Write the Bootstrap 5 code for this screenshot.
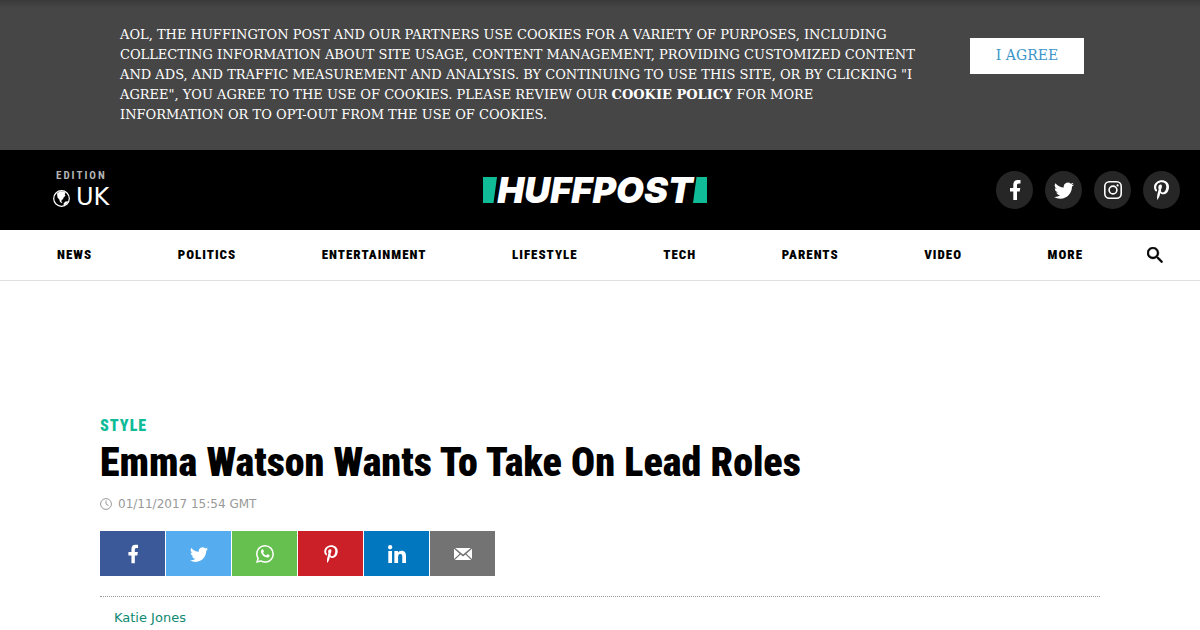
<!DOCTYPE html>
<html lang="en-GB">
<head>
<meta charset="utf-8">
<meta name="viewport" content="width=device-width, initial-scale=1">
<title>Emma Watson Wants To Take On Lead Roles | HuffPost UK</title>
<link href="https://cdn.jsdelivr.net/npm/bootstrap@5.3.0/dist/css/bootstrap.min.css" rel="stylesheet">
<style>
  body { font-family: "DejaVu Sans", sans-serif; color: #000; }
  a { text-decoration: none; }
  svg { display: block; fill: currentColor; }

  .cookie-bar {
    background: linear-gradient(#393939, #464646 8px);
    font: 13px/20px "DejaVu Serif", serif;
    padding: 25px 116px 25px 120px;
    color: #fff;
  }
  .cookie-copy { max-width: 800px; }
  .cookie-bar .btn {
    font: 14px/20px "DejaVu Serif", serif;
    color: #3b95c9; background: #fff;
    width: 114px; height: 36px; padding: 0 0 2px; margin-top: 13px;
  }

  .masthead { background: #000; min-height: 80px; padding: 0 20px 0 10px; }
  .edition { color: #fff; padding: 4px 0 0 43px; }
  .edition-label { font: 700 11px/12px "Roboto Condensed", Roboto, sans-serif; letter-spacing: 2px; color: #b4b4b4; padding-left: 3px; }
  .edition-name { font-size: 24px; line-height: 30px; gap: 6px; }
  .edition-name svg { margin-top: 3px; }
  .brand { color: #fff; font: italic 900 36px/40px Inter, sans-serif; }
  .brand svg { fill: #10bc97; }
  .social { gap: 12px; }
  .social a { width: 37px; height: 38px; background: #262626; color: #fff; }

  .sections { border-bottom: 1px solid #e0e0e0; height: 51px; padding: 0 37px 0 57px; gap: 64px; }
  .sections a { font: 900 13px/20px "Roboto Condensed", Roboto, sans-serif; letter-spacing: 1px; color: #000; }
  .sections .btn { color: #000; }

  .article { padding: 135px 100px 0; }
  .kicker { font: 900 16px/20px "Roboto Condensed", Roboto, sans-serif; letter-spacing: 1px; color: #10bc97; }
  .headline { font: 900 40px/54px "Roboto Condensed", Roboto, sans-serif; }
  .posted { font-size: 12px; line-height: 18px; color: #999; gap: 6px; margin-top: 5px; }
  .share { gap: 1px; margin-top: 18px; }
  .share .btn { width: 65px; height: 45px; color: #fff; }
  .byline { border-top: 1px dotted #999; margin-top: 20px; padding: 11px 14px; font-size: 13px; line-height: 20px; }
  .byline a { color: #0e8a72; }
</style>
</head>
<body>
<svg class="d-none" aria-hidden="true">
  <symbol id="facebook" viewBox="0 0 24 24"><path d="M14 13.500h2.700l.6-3.600H14V7.500c0-1.200.3-2 2-2h1.500V2.140c-.326-.043-1.557-.14-2.857-.14C11.928 2 10.300 3.657 10.300 6.700v3.200H7v3.600h3.300V22H14z"/></symbol>
  <symbol id="twitter" viewBox="0 0 16 16"><path d="M5.026 15c6.038 0 9.341-5.003 9.341-9.334 0-.14 0-.282-.006-.422A6.685 6.685 0 0 0 16 3.542a6.658 6.658 0 0 1-1.889.518 3.301 3.301 0 0 0 1.447-1.817 6.533 6.533 0 0 1-2.087.793A3.286 3.286 0 0 0 7.875 6.030a9.325 9.325 0 0 1-6.767-3.429 3.289 3.289 0 0 0 1.018 4.382A3.323 3.323 0 0 1 .64 6.575v.045a3.288 3.288 0 0 0 2.632 3.218 3.203 3.203 0 0 1-.865.115 3.230 3.230 0 0 1-.614-.057 3.283 3.283 0 0 0 3.067 2.277A6.588 6.588 0 0 1 .78 13.580a6.320 6.320 0 0 1-.78-.045A9.344 9.344 0 0 0 5.026 15z"/></symbol>
  <symbol id="pinterest" viewBox="0 0 384 512"><path d="M204 6.500C101.400 6.500 0 74.900 0 185.600 0 256 39.600 296 63.600 296c9.900 0 15.600-27.600 15.600-35.400 0-9.300-23.700-29.100-23.700-67.800 0-80.400 61.200-137.400 140.400-137.400 68.100 0 118.500 38.700 118.500 109.800 0 53.100-21.300 152.700-90.300 152.700-24.900 0-46.200-18-46.200-43.800 0-37.800 26.400-74.400 26.400-113.400 0-66.200-93.900-54.200-93.900 25.800 0 16.800 2.100 35.400 9.600 50.700-13.800 59.400-42 147.900-42 209.100 0 18.900 2.700 37.500 4.500 56.400 3.400 3.800 1.700 3.400 6.900 1.500 50.400-69 48.600-82.500 71.400-172.800 12.300 23.400 44.100 36 69.300 36 106.200 0 153.900-103.500 153.900-196.800C384 71.300 298.200 6.500 204 6.500z"/></symbol>
</svg>

<div class="cookie-bar d-flex justify-content-between align-items-start">
  <p class="cookie-copy mb-0">AOL, THE HUFFINGTON POST AND OUR PARTNERS USE COOKIES FOR A VARIETY OF PURPOSES, INCLUDING COLLECTING INFORMATION ABOUT SITE USAGE, CONTENT MANAGEMENT, PROVIDING CUSTOMIZED CONTENT AND ADS, AND TRAFFIC MEASUREMENT AND ANALYSIS. BY CONTINUING TO USE THIS SITE, OR BY CLICKING "I AGREE", YOU AGREE TO THE USE OF COOKIES. PLEASE REVIEW OUR <a class="text-white fw-bold" href="#">COOKIE POLICY</a> FOR MORE INFORMATION OR TO OPT-OUT FROM THE USE OF COOKIES.</p>
  <button type="button" class="btn rounded-0 border-0 flex-shrink-0">I AGREE</button>
</div>

<header class="masthead d-flex align-items-center">
  <div class="col">
    <a href="#" class="edition d-inline-block">
      <span class="edition-label d-block">EDITION</span>
      <span class="edition-name d-flex align-items-center">
        <svg width="17" height="17" viewBox="0 0 17 17" aria-hidden="true"><circle cx="8.500" cy="8.500" r="7.800" fill="none" stroke="currentColor" stroke-width="1.200"/><path d="M4 3.500 7 1.200l4 .3 1.500 1.500-.8 1.200.8 1.500-1.700 1.600-1 2.200-1 .2-.5 1.800 1 .8-.3.600L7 12 6.300 9.500 4.500 7.500zM12 11.800l3-.8-1.500 2.800-2.500 1.500-.6-1.400z"/></svg>
        <span>UK</span>
      </span>
    </a>
  </div>
  <a href="#" class="brand d-flex align-items-center">
    <svg width="14" height="26" viewBox="0 0 14 26" aria-hidden="true"><path d="M0 0h14L10.500 26H0z"/></svg>
    <span>HUFFPOST</span>
    <svg width="14" height="26" viewBox="0 0 14 26" aria-hidden="true"><path d="M3.500 0H14v26H0z"/></svg>
  </a>
  <nav class="social col d-flex justify-content-end" aria-label="Social">
    <a href="#" aria-label="Facebook" class="rounded-circle d-flex align-items-center justify-content-center"><svg width="24" height="24"><use href="#facebook"/></svg></a>
    <a href="#" aria-label="Twitter" class="rounded-circle d-flex align-items-center justify-content-center"><svg width="20" height="20"><use href="#twitter"/></svg></a>
    <a href="#" aria-label="Instagram" class="rounded-circle d-flex align-items-center justify-content-center"><svg width="18" height="18" viewBox="0 0 18 18"><g fill="none" stroke="currentColor" stroke-width="1.600"><rect x=".8" y=".8" width="16.400" height="16.400" rx="4.500"/><circle cx="9" cy="9" r="3.900"/></g><circle cx="13.600" cy="4.400" r="1.100"/></svg></a>
    <a href="#" aria-label="Pinterest" class="rounded-circle d-flex align-items-center justify-content-center"><svg width="15" height="20"><use href="#pinterest"/></svg></a>
  </nav>
</header>

<nav class="sections d-flex align-items-center" aria-label="Sections">
  <div class="d-flex flex-grow-1 justify-content-between">
    <a href="#">NEWS</a>
    <a href="#">POLITICS</a>
    <a href="#">ENTERTAINMENT</a>
    <a href="#">LIFESTYLE</a>
    <a href="#">TECH</a>
    <a href="#">PARENTS</a>
    <a href="#">VIDEO</a>
    <a href="#">MORE</a>
  </div>
  <button type="button" class="btn border-0 p-0" aria-label="Search"><svg width="16" height="16" viewBox="3 3 17.500 17.500"><path stroke="currentColor" stroke-width=".5" d="M15.500 14h-.79l-.28-.27A6.471 6.471 0 0 0 16 9.500 6.500 6.500 0 1 0 9.500 16c1.610 0 3.090-.59 4.230-1.570l.27.280v.79l5 4.990L20.490 19l-4.990-5zm-6 0C7.010 14 5 11.990 5 9.500S7.010 5 9.500 5 14 7.010 14 9.500 11.990 14 9.500 14z"/></svg></button>
</nav>

<main class="article">
  <a href="#" class="kicker d-block">STYLE</a>
  <h1 class="headline mb-0">Emma Watson Wants To Take On Lead Roles</h1>
  <div class="posted d-flex align-items-center">
    <svg width="12" height="12" viewBox="0 0 12 12" aria-hidden="true"><g fill="none" stroke="currentColor"><circle cx="6" cy="6" r="5.400"/><path d="M6 2.500V6l2.500 1.500"/></g></svg>
    <time datetime="2017-11-01T15:54">01/11/2017 15:54 GMT</time>
  </div>
  <div class="share d-flex">
    <button type="button" aria-label="Share on Facebook" class="btn rounded-0 border-0 p-0 d-flex align-items-center justify-content-center" style="background:#3b5998"><svg width="22" height="22"><use href="#facebook"/></svg></button>
    <button type="button" aria-label="Share on Twitter" class="btn rounded-0 border-0 p-0 d-flex align-items-center justify-content-center" style="background:#55acee"><svg width="18" height="18"><use href="#twitter"/></svg></button>
    <button type="button" aria-label="Share on WhatsApp" class="btn rounded-0 border-0 p-0 d-flex align-items-center justify-content-center" style="background:#65c04f"><svg width="18" height="18" viewBox="0 0 16 16"><path d="M13.601 2.326A7.854 7.854 0 0 0 7.994 0C3.627 0 .068 3.558.064 7.926c0 1.399.366 2.760 1.057 3.965L0 16l4.204-1.102a7.933 7.933 0 0 0 3.790.965h.004c4.368 0 7.926-3.558 7.930-7.930A7.898 7.898 0 0 0 13.600 2.326zM7.994 14.521a6.573 6.573 0 0 1-3.356-.92l-.24-.144-2.494.654.666-2.433-.156-.251a6.560 6.560 0 0 1-1.007-3.505c0-3.626 2.957-6.584 6.591-6.584a6.560 6.560 0 0 1 4.660 1.931 6.557 6.557 0 0 1 1.928 4.660c-.004 3.639-2.961 6.592-6.592 6.592z"/><path d="M5.200 4.100c.5-.5 1-.4 1.200.1l.6 1.400c.2.500-.2.800-.6 1.300.6 1.200 1.500 2 2.700 2.500l.8-.9c.3-.4.700-.2 1.300.1.800.4 1.100.5 1 .8-.1 1.200-1.200 1.900-2.200 1.800C7.500 10.900 5.200 9 4.500 6.700c-.2-1 .1-2 .7-2.600z"/></svg></button>
    <button type="button" aria-label="Share on Pinterest" class="btn rounded-0 border-0 p-0 d-flex align-items-center justify-content-center" style="background:#cb2027"><svg width="14" height="18"><use href="#pinterest"/></svg></button>
    <button type="button" aria-label="Share on LinkedIn" class="btn rounded-0 border-0 p-0 d-flex align-items-center justify-content-center" style="background:#0077bf"><svg width="18" height="18" viewBox="0 0 448 448"><path d="M100.280 448H7.400V148.900h92.880zM53.790 108.100C24.090 108.100 0 83.500 0 53.800a53.790 53.790 0 0 1 107.580 0c0 29.700-24.100 54.300-53.790 54.300zM447.900 448h-92.680V302.400c0-34.700-.7-79.200-48.290-79.200-48.290 0-55.690 37.700-55.690 76.700V448h-92.780V148.900h89.080v40.800h1.300c12.400-23.500 42.690-48.300 87.880-48.300 94 0 111.280 61.900 111.280 142.300V448z"/></svg></button>
    <button type="button" aria-label="Share by email" class="btn rounded-0 border-0 p-0 d-flex align-items-center justify-content-center" style="background:#737373"><svg width="18" height="12" viewBox="0 0 18 12"><path d="M1.200 0h15.600L9 6.600zM0 .8 5.600 5.700 0 11zM18 .8V11l-5.600-5.300zM6.500 6.500 9 8.500l2.500-2L17.200 12H.8z"/></svg></button>
  </div>
  <div class="byline"><a href="#">Katie Jones</a></div>
</main>
<script src="https://cdn.jsdelivr.net/npm/bootstrap@5.3.0/dist/js/bootstrap.bundle.min.js"></script>
</body>
</html>
